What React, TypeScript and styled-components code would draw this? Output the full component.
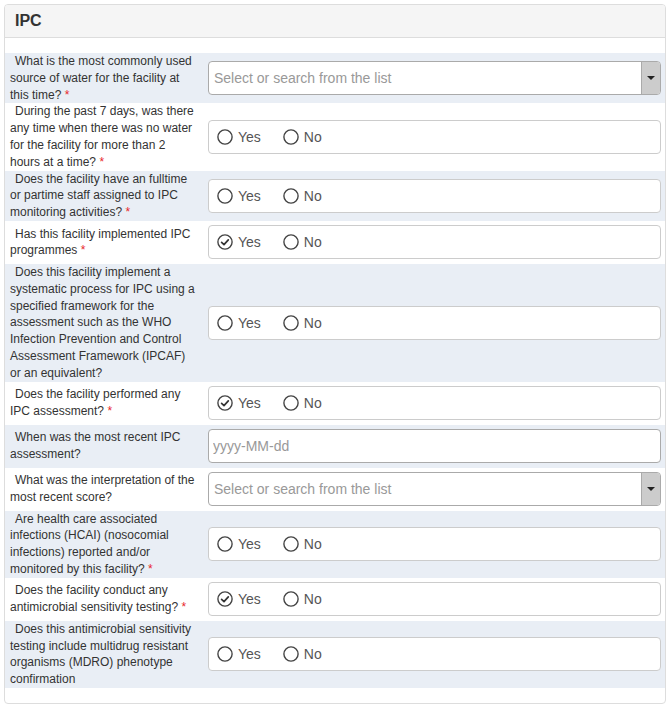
import React from 'react';
import styled, {createGlobalStyle} from 'styled-components';

type Question = {
    label: string
    required?: boolean
    kind: 'select' | 'radio' | 'date'
    value?: 'yes' | 'no'
}

const questions: Question[] = [
    {label: 'What is the most commonly used source of water for the facility at this time?', required: true, kind: 'select'},
    {label: 'During the past 7 days, was there any time when there was no water for the facility for more than 2 hours at a time?', required: true, kind: 'radio'},
    {label: 'Does the facility have an fulltime or partime staff assigned to IPC monitoring activities?', required: true, kind: 'radio'},
    {label: 'Has this facility implemented IPC programmes', required: true, kind: 'radio', value: 'yes'},
    {label: 'Does this facility implement a systematic process for IPC using a specified framework for the assessment such as the WHO Infection Prevention and Control Assessment Framework (IPCAF) or an equivalent?', kind: 'radio'},
    {label: 'Does the facility performed any IPC assessment?', required: true, kind: 'radio', value: 'yes'},
    {label: 'When was the most recent IPC assessment?', kind: 'date'},
    {label: 'What was the interpretation of the most recent score?', kind: 'select'},
    {label: 'Are health care associated infections (HCAI) (nosocomial infections) reported and/or monitored by this facility?', required: true, kind: 'radio'},
    {label: 'Does the facility conduct any antimicrobial sensitivity testing?', required: true, kind: 'radio', value: 'yes'},
    {label: 'Does this antimicrobial sensitivity testing include multidrug resistant organisms (MDRO) phenotype confirmation', kind: 'radio'},
]

const RadioIcon = ({checked}: {checked: boolean}) => (
    <svg width="16" height="16" viewBox="0 0 16 16">
        <circle cx="8" cy="8" r="7.1" fill="#fff" stroke="#444" strokeWidth="1.4"/>
        {checked && <path d="M4.6 8.3 L7 10.6 L11.3 5.9" fill="none" stroke="#333" strokeWidth="1.7"
                          strokeLinecap="round" strokeLinejoin="round"/>}
    </svg>
)

const Field = ({q}: {q: Question}) => {
    switch (q.kind) {
        case 'select':
            return (
                <SelectBox>
                    <Placeholder>Select or search from the list</Placeholder>
                    <ArrowBox><Caret/></ArrowBox>
                </SelectBox>
            )
        case 'date':
            return <DateInput placeholder="yyyy-MM-dd" readOnly/>
        default:
            return (
                <RadioBox>
                    <RadioOption><RadioIcon checked={q.value === 'yes'}/>Yes</RadioOption>
                    <RadioOption><RadioIcon checked={q.value === 'no'}/>No</RadioOption>
                </RadioBox>
            )
    }
}

export default function App() {
    return (
        <>
            <GlobalStyle/>
            <Panel>
                <PanelHeader>IPC</PanelHeader>
                <PanelBody>
                    {questions.map((q, i) => (
                        <Row key={i} $shaded={i % 2 === 0}>
                            <Label>
                                {q.label}
                                {q.required && <Required> *</Required>}
                            </Label>
                            <InputCol><Field q={q}/></InputCol>
                        </Row>
                    ))}
                </PanelBody>
            </Panel>
        </>
    );
}

const GlobalStyle = createGlobalStyle`
  body {
    margin: 0;
    background: #fff;
    font-family: "Liberation Sans", Arial, sans-serif;
    color: #333;
  }
`

const Panel = styled.div`
  margin: 4px;
  border: 1px solid #ddd;
  border-radius: 4px;
  background: #fff;
  overflow: hidden;
`

const PanelHeader = styled.div`
  background: #f5f5f5;
  border-bottom: 1px solid #ddd;
  padding: 7px 10px;
  font-size: 16px;
  line-height: 18px;
  font-weight: bold;
  color: #333;
`

const PanelBody = styled.div`
  padding: 15px 0;
`

const Row = styled.div<{ $shaded: boolean }>`
  display: grid;
  grid-template-columns: 198px 1fr;
  align-items: center;
  background: ${p => p.$shaded ? '#e9eef5' : '#fff'};
`

const Label = styled.div`
  padding: 0 5px;
  text-indent: 5px;
  font-size: 12px;
  line-height: 16.8px;
  color: #333;
`

const Required = styled.span`
  color: #e8262b;
`

const InputCol = styled.div`
  padding: 4.5px 4px 4.5px 5px;
`

const SelectBox = styled.div`
  display: flex;
  align-items: stretch;
  height: 34px;
  box-sizing: border-box;
  border: 1px solid #aaa;
  border-radius: 4px;
  background: #fff;
  overflow: hidden;
`

const Placeholder = styled.span`
  flex: 1;
  display: flex;
  align-items: center;
  padding-left: 5px;
  font-size: 14px;
  color: #999;
`

const ArrowBox = styled.span`
  width: 18px;
  display: flex;
  align-items: center;
  justify-content: center;
  background: #ccc;
  border-left: 1px solid #aaa;
`

const Caret = styled.span`
  width: 0;
  height: 0;
  border-left: 4px solid transparent;
  border-right: 4px solid transparent;
  border-top: 4px solid #222;
`

const DateInput = styled.input`
  display: block;
  width: 100%;
  height: 34px;
  box-sizing: border-box;
  border: 1px solid #aaa;
  border-radius: 4px;
  padding: 0 4px;
  font-family: "Liberation Sans", Arial, sans-serif;
  font-size: 14px;
  outline: none;

  &::placeholder {
    color: #999;
  }
`

const RadioBox = styled.div`
  display: flex;
  align-items: center;
  gap: 22px;
  height: 34px;
  box-sizing: border-box;
  border: 1px solid #ccc;
  border-radius: 4px;
  background: #fff;
  padding-left: 8px;
`

const RadioOption = styled.label`
  display: flex;
  align-items: center;
  gap: 5px;
  font-size: 14px;
  color: #555;
  cursor: pointer;
`
